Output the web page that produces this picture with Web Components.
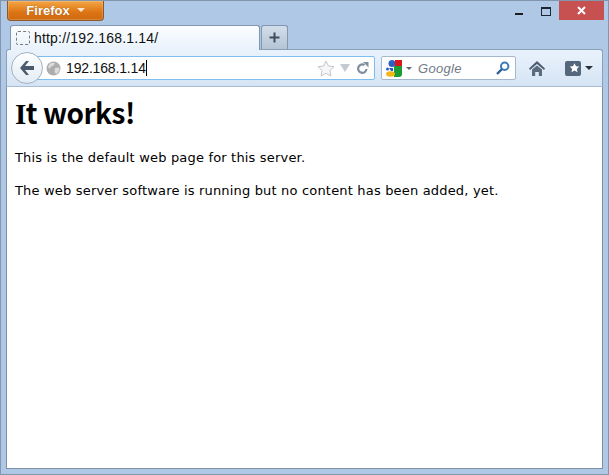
<!DOCTYPE html>
<html>
<head>
<meta charset="utf-8">
<title>Firefox</title>
<style>
  html, body { margin: 0; padding: 0; height: 100%; overflow: hidden; }
</style>
</head>
<body>
<fx-window>
  <fx-titlebar></fx-titlebar>
  <fx-tabstrip title-text="http://192.168.1.14/"></fx-tabstrip>
  <fx-toolbar url="192.168.1.14"></fx-toolbar>
  <fx-page>
    <h1 slot="heading"><span style="font-family:'Liberation Serif',serif;font-size:29px">I</span>t works!</h1>
    <p>This is the default web page for this server.</p>
    <p>The web server software is running but no content has been added, yet.</p>
  </fx-page>
</fx-window>

<script>
class FxWindow extends HTMLElement {
  constructor() {
    super();
    this.attachShadow({ mode: 'open' });
    this.shadowRoot.innerHTML = `
      <style>
        :host {
          display: flex;
          flex-direction: column;
          box-sizing: border-box;
          width: 609px;
          height: 475px;
          background: #aec8e5;
          border: 1px solid #8296ae;
          font-family: "Liberation Sans", sans-serif;
        }
      </style>
      <slot></slot>
    `;
  }
}

class FxTitlebar extends HTMLElement {
  constructor() {
    super();
    this.attachShadow({ mode: 'open' });
    this.shadowRoot.innerHTML = `
      <style>
        :host {
          display: flex;
          justify-content: space-between;
          height: 24px;
          padding: 0 4px 0 6px;
        }
        .menu {
          box-sizing: border-box;
          width: 97px;
          height: 20px;
          display: flex;
          align-items: center;
          justify-content: center;
          gap: 7px;
          color: #fff;
          font: bold 13px "Liberation Sans", sans-serif;
          text-shadow: 0 0 1px #8a4300;
          background: linear-gradient(#f2a648 0, #e98e2c 30%, #dc7414 60%, #cf6a10 100%);
          border: 1px solid #8c5a2a;
          border-top: 0;
          border-radius: 0 0 4px 4px;
          box-shadow: inset 0 0 0 1px rgba(255,255,255,.18);
          padding-bottom: 1px;
        }
        .menu i {
          width: 0;
          height: 0;
          border: 4px solid transparent;
          border-top: 4px solid #fbe7cf;
          border-bottom: 0;
        }
        .controls { display: flex; height: 20px; }
        .btn { display: flex; align-items: center; justify-content: center; }
        .min { width: 27px; }
        .max { width: 27px; }
        .close { width: 45px; height: 19px; background: #c75050; }
      </style>
      <div class="menu">Firefox<i></i></div>
      <div class="controls">
        <div class="btn min"><svg width="8" height="12" viewBox="0 0 8 12"><rect x="0" y="8" width="8" height="2" fill="#1d1d1d"/></svg></div>
        <div class="btn max"><svg width="10" height="9" viewBox="0 0 10 9"><rect x=".5" y=".5" width="9" height="8" fill="none" stroke="#1d2530"/><rect x="0" y="0" width="10" height="2" fill="#1d2530"/></svg></div>
        <div class="btn close"><svg width="9" height="9" viewBox="0 0 9 9"><path d="M1 1l7 7M8 1l-7 7" stroke="#fff" stroke-width="2"/></svg></div>
      </div>
    `;
  }
}

class FxTabstrip extends HTMLElement {
  constructor() {
    super();
    this.attachShadow({ mode: 'open' });
    const label = this.getAttribute('title-text');
    this.shadowRoot.innerHTML = `
      <style>
        :host {
          display: flex;
          align-items: flex-end;
          height: 25px;
          margin-bottom: -1px;
          padding-left: 9px;
          gap: 1px;
          position: relative;
          z-index: 2;
        }
        .tab {
          box-sizing: border-box;
          width: 250px;
          height: 25px;
          display: flex;
          align-items: center;
          gap: 4px;
          padding: 0 0 1px 5px;
          background: linear-gradient(#fbfdff, #e8f2fb);
          border: 1px solid #8296ae;
          border-bottom: 0;
          border-radius: 3px 3px 0 0;
          color: #101010;
          font: 14px "Liberation Sans", sans-serif;
          letter-spacing: .18px;
        }
        .fav {
          box-sizing: border-box;
          width: 14px;
          height: 14px;
          border: 1px dashed #7a7a7a;
          border-radius: 2px;
          flex: none;
        }
        .new {
          box-sizing: border-box;
          width: 27px;
          height: 24px;
          margin-bottom: 1px;
          display: flex;
          align-items: center;
          justify-content: center;
          background: linear-gradient(#d3deea, #b5c4d5);
          border: 1px solid #8296ae;
          border-bottom: 0;
          border-radius: 3px 3px 0 0;
        }
      </style>
      <div class="tab"><span class="fav"></span><span>${label}</span></div>
      <div class="new"><svg width="11" height="11" viewBox="0 0 11 11"><path d="M5.500 .5v10M.5 5.500h10" stroke="#3f4c5c" stroke-width="2"/></svg></div>
    `;
  }
}

class FxToolbar extends HTMLElement {
  constructor() {
    super();
    this.attachShadow({ mode: 'open' });
    const url = this.getAttribute('url');
    this.shadowRoot.innerHTML = `
      <style>
        :host {
          display: flex;
          align-items: center;
          box-sizing: border-box;
          height: 38px;
          margin: 0 5px;
          padding: 0 0 0 4px;
          background: linear-gradient(#eaf3fc, #d5e4f4);
          border: 1px solid #8aa0b9;
          border-bottom-color: #a9bfd8;
          border-radius: 3px 3px 0 0;
          position: relative;
          z-index: 1;
        }
        .back {
          box-sizing: border-box;
          width: 32px;
          height: 32px;
          flex: none;
          border-radius: 50%;
          border: 1px solid #a3b1c1;
          background: linear-gradient(#fdfeff, #e3ecf5);
          display: flex;
          align-items: center;
          justify-content: center;
          position: relative;
          z-index: 1;
          margin-right: -15px;
        }
        .url {
          box-sizing: border-box;
          width: 347px;
          height: 24px;
          flex: none;
          display: flex;
          align-items: center;
          padding: 0 5px 0 17px;
          background: #fff;
          border: 1px solid #7fbdf0;
          border-radius: 0 2px 2px 0;
          color: #101010;
          font: 14px "Liberation Sans", sans-serif;
          letter-spacing: -.16px;
        }
        .globe { flex: none; margin-right: 5px; }
        .text { flex: 1; }
        .caret { display: inline-block; width: 1px; height: 16px; background: #000; vertical-align: -3px; }
        .url svg + svg { margin-left: 4px; }
        .search {
          box-sizing: border-box;
          width: 135px;
          height: 24px;
          margin-left: 6px;
          flex: none;
          display: flex;
          align-items: center;
          padding: 0 5px 0 4px;
          background: #fff;
          border: 1px solid #a6b8cd;
          border-radius: 2px;
          color: #6f7a86;
          font: italic 13px "Liberation Sans", sans-serif;
        }
        .search .name { flex: 1; margin-left: 6px; letter-spacing: .3px; }
        .drop { width: 0; height: 0; border: 3px solid transparent; border-top: 3px solid #5d6874; border-bottom: 0; margin-left: 4px; }
        .home { margin-left: 13px; flex: none; display: block; }
        .bookmarks { margin-left: 20px; flex: none; display: flex; align-items: center; gap: 4px; }
        .bookmarks .drop { border-width: 4px 4px 0; border-top-color: #27313c; margin: 0; }
      </style>
      <div class="back">
        <svg width="18" height="16" viewBox="0 0 18 16"><path d="M8 1L2 8l6 7h3L7 10h9V6H7l4-5z" fill="#4a5b6d"/></svg>
      </div>
      <div class="url">
        <svg class="globe" width="15" height="15" viewBox="0 0 15 15"><circle cx="7.500" cy="7.500" r="7" fill="#adadad"/><path d="M4 2.500c2-1 4-1 5 0L7 5 5 5.500 3.500 8 2 6zM9 7l4-.5.500 3-3 3.500L8.500 11z" fill="#dcdcdc"/></svg>
        <span class="text">${url}<span class="caret"></span></span>
        <svg width="18" height="17" viewBox="0 0 18 17"><path d="M9 1l2.400 5 5.600.700-4.100 3.800 1.100 5.500L9 13.300 4 16l1.100-5.500L1 6.700 6.600 6z" fill="#f7f7f7" stroke="#c3c7cb"/></svg>
        <svg width="12" height="8" viewBox="0 0 12 8"><path d="M1 0h10L6 8z" fill="#c3cad1"/></svg>
        <svg style="margin-left:5px" width="13" height="13" viewBox="0 0 13 13"><path d="M10.500 7A4.200 4.200 0 1 1 8.500 3" fill="none" stroke="#7f8f9f" stroke-width="2.200"/><path d="M7 0h5.500v5.500z" fill="#7f8f9f"/></svg>
      </div>
      <div class="search">
        <svg width="16" height="17" viewBox="0 0 16 17"><circle cx="6" cy="3.500" r="3.500" fill="#2c5fc4"/><path d="M9 0h7v6H9z" fill="#d8161b"/><path d="M8 6h8v8a3 3 0 0 1-3 3H8z" fill="#1c9b39"/><circle cx="1.500" cy="9" r="1.500" fill="#2c5fc4"/><path d="M3 8h4v3H5z" fill="#2c5fc4"/><ellipse cx="4.500" cy="14" rx="4.500" ry="2.700" fill="#f1b81a"/></svg>
        <span class="drop"></span>
        <span class="name">Google</span>
        <svg width="14" height="14" viewBox="0 0 14 14"><circle cx="8.700" cy="5.300" r="3.700" fill="none" stroke="#3a78b8" stroke-width="2"/><path d="M6 8l-5 5" stroke="#2b5f9a" stroke-width="2.400"/></svg>
      </div>
      <svg class="home" width="16" height="15" viewBox="0 0 16 15"><path d="M8 0L0 7.500 1 9l7-6 7 6 1-1.500z" fill="#4b5c6e"/><path d="M3 8.500L8 4.500l5 4V15H9.800v-4H6.200v4H3z" fill="#5b6c7e"/></svg>
      <div class="bookmarks">
        <svg width="16" height="15" viewBox="0 0 16 15"><rect width="16" height="15" rx="2" fill="#55677a"/><path d="M9.500 2.200l1.500 3 3.200.400-2.300 2.300.600 3.300-3-1.600-3 1.600.600-3.300L4.800 5.600 8 5.200z" fill="#fff"/></svg>
        <span class="drop"></span>
      </div>
    `;
  }
}

class FxPage extends HTMLElement {
  constructor() {
    super();
    this.attachShadow({ mode: 'open' });
    this.shadowRoot.innerHTML = `
      <style>
        :host {
          display: block;
          box-sizing: border-box;
          flex: none;
          height: 382px;
          margin: 0 5px;
          padding: 9px 8px 0;
          background: #fff;
          border: 1px solid #7d90a6;
          border-top: 0;
          color: #000;
          font: 13px "DejaVu Sans", sans-serif;
          letter-spacing: .18px;
        }
        ::slotted(h1) {
          margin: 0 0 18px;
          font: bold 28px/32px "Noto Sans CJK JP", sans-serif;
          letter-spacing: -.5px;
        }
        ::slotted(p) {
          margin: 0 0 13px;
          line-height: 20px;
        }
      </style>
      <slot name="heading"></slot>
      <slot></slot>
    `;
  }
}

customElements.define('fx-window', FxWindow);
customElements.define('fx-titlebar', FxTitlebar);
customElements.define('fx-tabstrip', FxTabstrip);
customElements.define('fx-toolbar', FxToolbar);
customElements.define('fx-page', FxPage);
</script>
</body>
</html>
